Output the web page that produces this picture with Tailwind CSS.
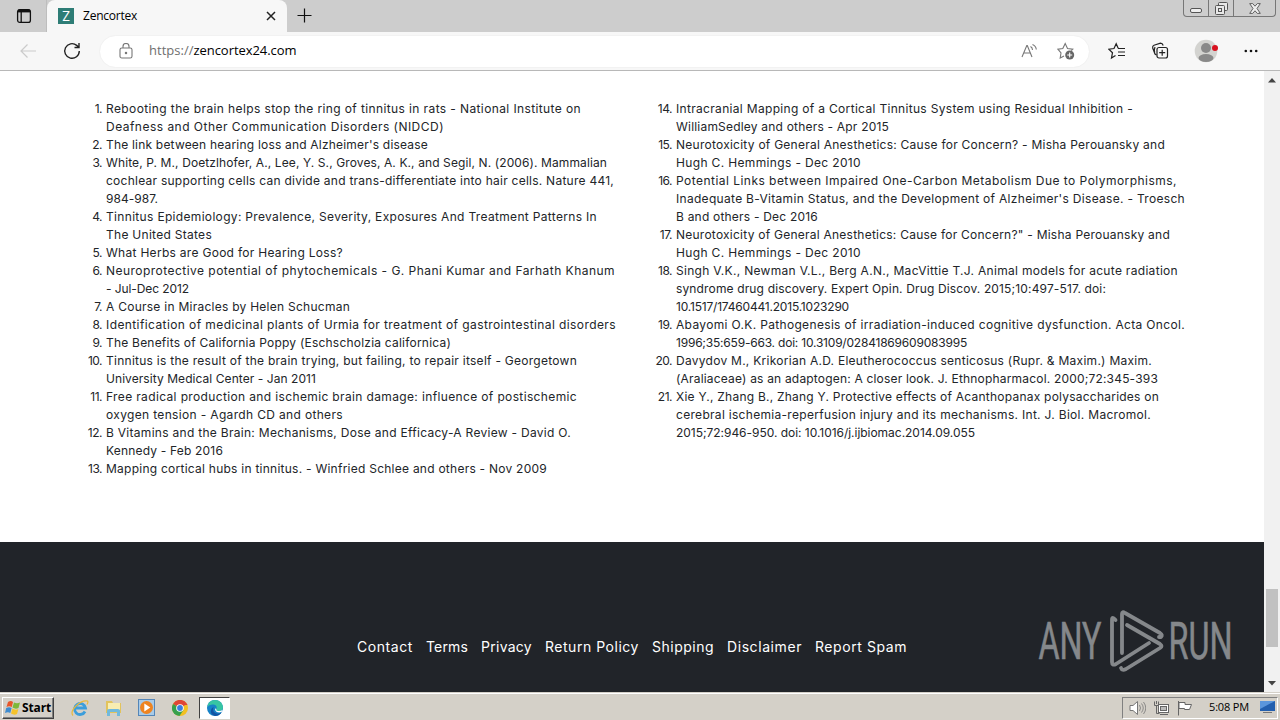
<!DOCTYPE html>
<html lang="en">
<head>
<meta charset="utf-8">
<title>Zencortex</title>
<script src="https://cdn.jsdelivr.net/npm/@tailwindcss/browser@4"></script>
</head>
<body class="w-[1280px] h-[720px] overflow-hidden flex flex-col bg-white">
<!-- tab strip -->
<header class="h-8 shrink-0 bg-[#cdcdcd] flex items-start font-['Open_Sans',sans-serif] text-[12px] text-black">
  <div class="w-[47px] h-8 pl-4 pt-2 border-r border-[#bdbdbd]">
    <svg class="w-4 h-4" viewBox="0 0 16 16" fill="none" stroke="#111" stroke-width="1.3"><rect x="1.6" y="1.6" width="12.8" height="12.8" rx="2.2"/><path d="M2 3h12" stroke-width="2.8"/><path d="M5.2 3v11"/></svg>
  </div>
  <div class="w-[240px] h-8 bg-[#f7f7f7] rounded-t-lg flex items-center pl-[11px] pr-[10px]">
    <div class="w-4 h-4 bg-[#2e7d76] text-white text-[13px] leading-4 text-center font-['Inter',sans-serif]">Z</div>
    <span class="ml-[9px] whitespace-nowrap" data-w="54">Zencortex</span>
    <svg class="ml-auto w-3 h-3" viewBox="0 0 12 12" stroke="#222" stroke-width="1.5"><path d="M2 2l8 8M10 2l-8 8"/></svg>
  </div>
  <svg class="w-4 h-4 ml-[10px] mt-2" viewBox="0 0 16 16" stroke="#111" stroke-width="1.2"><path d="M.5 7.5h14M7.5.5v14"/></svg>
  <div class="ml-auto mr-1 flex h-[17px] w-[93px] border border-t-0 border-[#777] rounded-b-[4px]">
    <div class="w-[25px] border-r border-[#777] flex justify-center pt-2"><svg class="w-3 h-[5px]" viewBox="0 0 12 5"><rect x=".5" y=".5" width="11" height="4" rx="1.5" fill="#eee" stroke="#555"/></svg></div>
    <div class="w-[25px] border-r border-[#777] flex justify-center pt-[2px]"><svg class="w-[13px] h-[13px]" viewBox="0 0 13 13" fill="#e8e8e8" stroke="#555"><rect x="3.5" y=".5" width="9" height="8" rx="1"/><rect x=".5" y="3.5" width="9" height="9" rx="1"/><rect x="3.5" y="6.5" width="3" height="3"/></svg></div>
    <div class="flex-1 flex justify-center pt-[3px]"><svg class="w-3 h-[11px]" viewBox="0 0 12 11"><path d="M.7.6h3L6 3.200 8.300.6h3L8 5.500l3.300 4.900h-3L6 7.800 3.700 10.400h-3L4 5.500z" fill="#eee" stroke="#555" stroke-width=".9"/></svg></div>
  </div>
</header>
<!-- toolbar -->
<nav class="h-[39px] shrink-0 bg-[#f7f7f7] border-b border-[#b8b8b8] flex items-center font-['Open_Sans',sans-serif]">
  <svg class="w-4 h-4 ml-5" viewBox="0 0 16 16" fill="none" stroke="#cbcbcb" stroke-width="1.2"><path d="M16 8H1M7.500 1.500L1 8l6.500 6.500"/></svg>
  <svg class="w-[18px] h-[18px] ml-[27px]" viewBox="0 0 18 18" fill="none" stroke="#222" stroke-width="1.4"><path d="M16.300 9a7.300 7.300 0 1 1-2.600-5.600L15.500 5M16 1v4.500h-4.500"/></svg>
  <div class="w-[989px] h-[31px] ml-[19px] bg-white rounded-full flex items-center pl-[19px] pr-[14px] outline-1 outline-[#f2f2f2]">
    <svg class="w-[14px] h-4 mb-px" viewBox="0 0 14 16" fill="none" stroke="#777" stroke-width="1.100"><rect x="1" y="5" width="12" height="10" rx="1.800"/><path d="M4 5V3.500a3 3 0 0 1 6 0V5"/><circle cx="7" cy="10" r=".7" fill="#777"/></svg>
    <div class="ml-4 text-[13px] whitespace-nowrap flex text-black"><span class="text-[#6f6f6f]" data-w="44.500">https://</span><span data-w="103">zencortex24.com</span></div>
    <svg class="ml-auto w-[17px] h-4" viewBox="0 0 17 16" fill="none" stroke="#777" stroke-width="1.100"><path d="M1 14L5.800 2.500h.5L11 14M2.800 10h6.600M9.500 3.500q2 1 2 3.500M11.500 1.500q3.500 1.500 3.800 5"/></svg>
    <svg class="ml-[19px] w-[18px] h-[18px]" viewBox="0 0 18 18" fill="none" stroke="#777" stroke-width="1.100"><path d="M7 14l-3.800 2 .8-5.200L.9 7.200l4.900-.7L8.200 1.500l2.300 5 5.300.6-1.500 1.600"/><circle cx="12.700" cy="13" r="4.500" fill="#666" stroke="none"/><path d="M10.200 13h5M12.700 10.500v5" stroke="#fff"/></svg>
  </div>
  <svg class="ml-[19px] w-[18px] h-[18px]" viewBox="0 0 18 18" fill="none" stroke="#222" stroke-width="1.200"><path d="M7.500 13.500L3.500 16l1-5.300L.9 7.200l5.100-.7L8.200 1.700l2 4.500M10 6.500h7M10 10h7M10 13.500h7"/></svg>
  <svg class="ml-[25px] w-[18px] h-[18px]" viewBox="0 0 18 18" fill="none" stroke="#222" stroke-width="1.200"><path d="M5.500 13L4 12 1.700 6Q1.300 4 3 3.300L9.500 1.200q2 0 2.700 2.300M3.700 10.500q-.8-3 .3-5.500"/><rect x="6" y="5.500" width="10.500" height="10.500" rx="2"/><path d="M11.200 7.700v6M8.200 10.700h6"/></svg>
  <svg class="ml-[25px] w-6 h-6" viewBox="0 0 24 24"><circle cx="12" cy="12" r="11.300" fill="#d3d3d0"/><circle cx="12" cy="9" r="5" fill="#898989"/><ellipse cx="12" cy="19" rx="7.500" ry="4" fill="#898989"/><circle cx="21" cy="9" r="3" fill="#d8121f"/></svg>
  <svg class="ml-[26px] w-[14px] h-4" viewBox="0 0 14 16" fill="#111"><circle cx="1.800" cy="8" r="1.300"/><circle cx="7" cy="8" r="1.300"/><circle cx="12.200" cy="8" r="1.300"/></svg>
</nav>
<div class="h-[621px] shrink-0 flex">
  <main class="w-[1264px] flex flex-col">
    <!-- references -->
    <section class="h-[471px] bg-white pt-[29px] flex font-['Inter',sans-serif] text-[12px] leading-[18px] text-[#222529]">
      <ol start="1" class="list-none shrink-0 w-[570px] pl-[76px] [&>li]:flex [&>li>b]:w-[30px] [&>li>b]:shrink-0 [&>li>b]:pr-1 [&>li>b]:text-right [&>li>b]:font-normal [&>li>b]:tracking-[-0.5px] [&_span]:block [&_span]:whitespace-nowrap">
        <li><b>1.</b><div><span data-w="475">Rebooting the brain helps stop the ring of tinnitus in rats - National Institute on</span><span data-w="338">Deafness and Other Communication Disorders (NIDCD)</span></div></li>
        <li><b>2.</b><div><span data-w="322">The link between hearing loss and Alzheimer's disease</span></div></li>
        <li><b>3.</b><div><span data-w="501">White, P. M., Doetzlhofer, A., Lee, Y. S., Groves, A. K., and Segil, N. (2006). Mammalian</span><span data-w="508">cochlear supporting cells can divide and trans-differentiate into hair cells. Nature 441,</span><span data-w="52">984-987.</span></div></li>
        <li><b>4.</b><div><span data-w="491">Tinnitus Epidemiology: Prevalence, Severity, Exposures And Treatment Patterns In</span><span data-w="106">The United States</span></div></li>
        <li><b>5.</b><div><span data-w="237">What Herbs are Good for Hearing Loss?</span></div></li>
        <li><b>6.</b><div><span data-w="509">Neuroprotective potential of phytochemicals - G. Phani Kumar and Farhath Khanum</span><span data-w="83">- Jul-Dec 2012</span></div></li>
        <li><b>7.</b><div><span data-w="244">A Course in Miracles by Helen Schucman</span></div></li>
        <li><b>8.</b><div><span data-w="510">Identification of medicinal plants of Urmia for treatment of gastrointestinal disorders</span></div></li>
        <li><b>9.</b><div><span data-w="345">The Benefits of California Poppy (Eschscholzia californica)</span></div></li>
        <li><b>10.</b><div><span data-w="471">Tinnitus is the result of the brain trying, but failing, to repair itself - Georgetown</span><span data-w="210">University Medical Center - Jan 2011</span></div></li>
        <li><b>11.</b><div><span data-w="471">Free radical production and ischemic brain damage: influence of postischemic</span><span data-w="237">oxygen tension - Agardh CD and others</span></div></li>
        <li><b>12.</b><div><span data-w="465">B Vitamins and the Brain: Mechanisms, Dose and Efficacy-A Review - David O.</span><span data-w="117">Kennedy - Feb 2016</span></div></li>
        <li><b>13.</b><div><span data-w="441">Mapping cortical hubs in tinnitus. - Winfried Schlee and others - Nov 2009</span></div></li>
      </ol>
      <ol start="14" class="list-none shrink-0 w-[620px] pl-[76px] [&>li]:flex [&>li>b]:w-[30px] [&>li>b]:shrink-0 [&>li>b]:pr-1 [&>li>b]:text-right [&>li>b]:font-normal [&>li>b]:tracking-[-0.5px] [&_span]:block [&_span]:whitespace-nowrap">
        <li><b>14.</b><div><span data-w="457">Intracranial Mapping of a Cortical Tinnitus System using Residual Inhibition -</span><span data-w="213">WilliamSedley and others - Apr 2015</span></div></li>
        <li><b>15.</b><div><span data-w="489">Neurotoxicity of General Anesthetics: Cause for Concern? - Misha Perouansky and</span><span data-w="185">Hugh C. Hemmings - Dec 2010</span></div></li>
        <li><b>16.</b><div><span data-w="501">Potential Links between Impaired One-Carbon Metabolism Due to Polymorphisms,</span><span data-w="509">Inadequate B-Vitamin Status, and the Development of Alzheimer's Disease. - Troesch</span><span data-w="142">B and others - Dec 2016</span></div></li>
        <li><b>17.</b><div><span data-w="494">Neurotoxicity of General Anesthetics: Cause for Concern?" - Misha Perouansky and</span><span data-w="185">Hugh C. Hemmings - Dec 2010</span></div></li>
        <li><b>18.</b><div><span data-w="502">Singh V.K., Newman V.L., Berg A.N., MacVittie T.J. Animal models for acute radiation</span><span data-w="430">syndrome drug discovery. Expert Opin. Drug Discov. 2015;10:497-517. doi:</span><span data-w="173">10.1517/17460441.2015.1023290</span></div></li>
        <li><b>19.</b><div><span data-w="509">Abayomi O.K. Pathogenesis of irradiation-induced cognitive dysfunction. Acta Oncol.</span><span data-w="291">1996;35:659-663. doi: 10.3109/02841869609083995</span></div></li>
        <li><b>20.</b><div><span data-w="476">Davydov M., Krikorian A.D. Eleutherococcus senticosus (Rupr. &amp; Maxim.) Maxim.</span><span data-w="482">(Araliaceae) as an adaptogen: A closer look. J. Ethnopharmacol. 2000;72:345-393</span></div></li>
        <li><b>21.</b><div><span data-w="483">Xie Y., Zhang B., Zhang Y. Protective effects of Acanthopanax polysaccharides on</span><span data-w="475">cerebral ischemia-reperfusion injury and its mechanisms. Int. J. Biol. Macromol.</span><span data-w="299">2015;72:946-950. doi: 10.1016/j.ijbiomac.2014.09.055</span></div></li>
      </ol>
    </section>
    <footer class="relative h-[150px] bg-[#212429] pt-[94px] pl-[357px] font-['Inter',sans-serif] text-[14px] leading-[22px] text-white">
      <div class="flex gap-[13px] whitespace-nowrap"><a data-w="56">Contact</a><a data-w="42">Terms</a><a data-w="51">Privacy</a><a data-w="94">Return Policy</a><a data-w="62">Shipping</a><a data-w="75">Disclaimer</a><a data-w="92">Report Spam</a></div>
      <svg class="absolute left-[1020px] top-[50px] w-[244px] h-[100px]" viewBox="1020 592 244 100" fill="#85888b" font-family="Roboto, sans-serif" font-size="52" font-weight="400">
        <g stroke="#85888b" stroke-width=".6"><text x="1038.500" y="659" textLength="63" lengthAdjust="spacingAndGlyphs">ANY</text>
        <text x="1168.500" y="659" textLength="64" lengthAdjust="spacingAndGlyphs">RUN</text></g>
        <g fill="none" stroke="#85888b" stroke-width="3.800" stroke-linejoin="round" stroke-linecap="round"><path d="M1115.500 620q-3.500-4-3.500 0v42q0 4 4 2L1149 643"/><path d="M1122 653V614q0-3 3-1l35 20q3 2 1 4h-2"/><path d="M1127 625l33 19q3 2 0 4l-34 21q-4 2-5-1"/></g>
      </svg>
    </footer>
  </main>
  <!-- scrollbar -->
  <aside class="w-4 bg-[#f1f1f1] flex flex-col items-center">
    <svg class="w-2 h-[5px] mt-[7px]" viewBox="0 0 8 5" fill="#444"><path d="M4 0l4 4.500H0z"/></svg>
    <div class="w-3 h-[58px] mt-[506px] bg-[#c1c1c1]"></div>
    <svg class="w-2 h-[5px] mt-[34px]" viewBox="0 0 8 5" fill="#444"><path d="M4 4.500L8 0H0z"/></svg>
  </aside>
</div>
<!-- taskbar -->
<div class="h-7 shrink-0 bg-[#d4d0c8] border-t border-[#d4d0c8] shadow-[inset_0_1px_0_#fff] flex items-center pt-[2px] text-[11px] text-black">
  <div class="ml-[2px] w-[52px] h-[22px] border border-white border-r-[#404040] border-b-[#404040] shadow-[inset_-1px_-1px_0_#808080] flex items-center pl-[2px]">
    <svg class="w-4 h-4 shrink-0" viewBox="0 0 16 16"><path d="M3 2q3-2 5 0L6.800 7Q4 5.500 1.500 7z" fill="#e8562a"/><path d="M9 2.500q3 1.500 6 0L13.500 8q-3 1.500-6-.5z" fill="#7db83a"/><path d="M1.200 8q3-1.500 5.400 0l-1.300 5Q3 11.500 0 13z" fill="#3d8bd0"/><path d="M7.400 8.500q3 2 6 .5L12 14q-3 1.500-6-.5z" fill="#f5c32c"/></svg>
    <b class="whitespace-nowrap ml-px text-[12px] font-['Open_Sans',sans-serif]" data-w="29">Start</b>
  </div>
  <svg class="ml-[17px] w-[18px] h-[18px]" viewBox="0 0 18 18" fill="none"><path d="M14 12.500A5.500 5.500 0 1 1 14.500 9H4" stroke="#3c9edb" stroke-width="2.800"/><path d="M2 16.500Q-1 13 5 7T16.500 2q1 1-.5 3.500" stroke="#e8b83b" stroke-width="1.200"/></svg>
  <svg class="ml-4 w-[18px] h-[18px]" viewBox="0 0 18 18"><path d="M1 2h6l1 2h8v10H1z" fill="#e2c35c"/><path d="M3 4h12v7H3z" fill="#f8edb1"/><path d="M2 17v-5q0-2 2-2h9q2 0 2 2v5h-3v-4H5v4z" fill="#71b9dc"/></svg>
  <svg class="ml-[15px] w-[17px] h-[17px]" viewBox="0 0 17 17"><rect x=".5" y=".5" width="16" height="16" fill="#a8cbe8" stroke="#5486b8"/><circle cx="8.500" cy="8.500" r="6.500" fill="#ee8420"/><path d="M6.300 4.500l6 4-6 4z" fill="#fff"/></svg>
  <svg class="ml-[17px] w-4 h-4" viewBox="0 0 16 16"><circle cx="8" cy="8" r="8" fill="#f2c021"/><path d="M8 8L1 4A8 8 0 0 1 15 4z" fill="#df4537"/><path d="M1 4a8 8 0 0 0 6.500 12L11.500 10 8 8z" fill="#36a04e"/><path d="M8 4h7L15.500 5H8z" fill="#df4537"/><circle cx="8" cy="8" r="3.800" fill="#fff"/><circle cx="8" cy="8" r="2.900" fill="#3a7de0"/></svg>
  <div class="ml-[11px] w-[31px] h-[22px] bg-white border border-[#404040] border-r-white border-b-white flex items-center justify-center">
    <svg class="w-4 h-4" viewBox="0 0 16 16"><circle cx="8" cy="8" r="8" fill="#1682c7"/><path d="M.3 7Q1.500 0 8 0t8 7q0 4-4.500 4-3 0-2-2 1-4-3-4.500Q2 4 .3 7z" fill="#37c5a3"/><path d="M6.500 7q-1.500 5 3 6.500 3 .5 5-1Q12 16 8 16 3 14.500 4 10q.5-2 2.500-3z" fill="#1254a3"/><path d="M8 8.500q0 4 4.500 4l3-1V10q-2 1.300-4.500 1-2.500-.5-1.500-2z" fill="#fff"/></svg>
  </div>
  <div class="ml-auto mr-[2px] w-[156px] h-[22px] border border-[#808080] border-r-white border-b-white flex items-center pl-[6px]">
    <svg class="w-[17px] h-4 shrink-0" viewBox="0 0 17 16" fill="none" stroke="#777"><path d="M1 5.500h3L8.500 1.500v13L4 10.500H1z" fill="#fff"/><path d="M10.500 5q2 3 0 6M12.500 3.500q3.500 4.500 0 9M14.500 2q4.500 6 0 12" stroke-width=".8"/></svg>
    <svg class="ml-[7px] w-[17px] h-4 shrink-0" viewBox="0 0 17 16" fill="#fff" stroke="#666"><rect x="5.500" y="4.500" width="10" height="8"/><rect x="7.500" y="6.500" width="6" height="4" fill="#bbb"/><path d="M7 14.500h8M1.500 1.500v4h4v-4M3.500 5.500v8h3M3.500 1v3" fill="none"/></svg>
    <svg class="ml-[7px] w-4 h-4 shrink-0" viewBox="0 0 16 16" fill="#fff" stroke="#666"><path d="M1.500 1v14.500M2 2.500h6v2h6.500l-2 5h-5v-1H2z"/></svg>
    <span class="ml-[16px] whitespace-nowrap text-[11px] font-['Open_Sans',sans-serif]" data-w="40">5:08 PM</span>
    <svg class="ml-[11px] w-[15px] h-[13px] shrink-0" viewBox="0 0 15 13"><rect width="15" height="10" fill="#235fae"/><path d="M0 0h15L0 8z" fill="#5b96dc"/><path d="M3 11.500h9" stroke="#777"/></svg>
  </div>
</div>
<script>
// Spread each run's letters so that it fills the width given in data-w.
function fitRuns() {
  document.querySelectorAll('[data-w]').forEach(el => {
    const w = parseFloat(el.dataset.w);
    el.style.letterSpacing = '0px';
    el.style.width = w + 'px';
    el.style.flexShrink = '0';
    const range = document.createRange();
    range.selectNodeContents(el);
    const natural = range.getBoundingClientRect().width;
    el.style.letterSpacing = ((w - natural) / el.textContent.length) + 'px';
  });
}
fitRuns();
window.addEventListener('load', () => {
  fitRuns();
  requestAnimationFrame(fitRuns);
  document.fonts.ready.then(fitRuns);
});
</script>
</body>
</html>
